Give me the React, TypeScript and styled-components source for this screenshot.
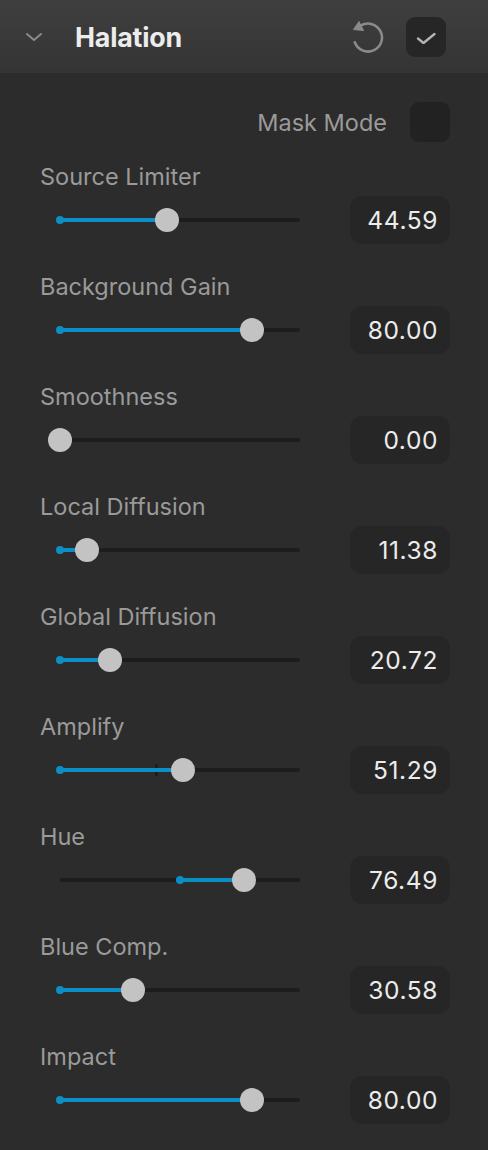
import React from "react";
import styled, { createGlobalStyle } from "styled-components";

const Global = createGlobalStyle`
  html, body { margin: 0; padding: 0; background: #2c2c2c; }
  body { font-family: Inter, "Noto Sans", sans-serif; -webkit-font-smoothing: antialiased; }
`;

const Panel = styled.div`
  width: 488px;
  min-height: 1150px;
  background: #2c2c2c;
`;

const Header = styled.div`
  height: 73px;
  display: flex;
  align-items: center;
  background: linear-gradient(#3f3f3f, #343434);
  padding: 0 42px 0 24px;
  box-sizing: border-box;
`;

const Chevron = styled.svg`
  width: 20px;
  height: 10px;
  margin-right: 31px;
`;

const Title = styled.div`
  flex: 1;
  color: #ececec;
  font-weight: 700;
  font-size: 26.8px;
  letter-spacing: -0.2px;
`;

const ResetIcon = styled.svg`
  width: 34px;
  height: 34px;
  margin-right: 22px;
`;

const HeaderCheck = styled.div`
  width: 40px;
  height: 40px;
  border-radius: 9px;
  background: #262626;
  display: flex;
  align-items: center;
  justify-content: center;
`;

const Body = styled.div`
  padding: 29px 38px 0 40px;
`;

const MaskRow = styled.div`
  height: 40px;
  display: flex;
  align-items: center;
  justify-content: flex-end;
  gap: 23px;
`;

const MaskLabel = styled.span`
  color: #9a9a9a;
  font-size: 23.5px;
`;

const MaskBox = styled.div`
  width: 40px;
  height: 40px;
  border-radius: 9px;
  background: #222222;
`;

const Rows = styled.div`
  margin-top: 13px;
  display: flex;
  flex-direction: column;
  gap: 21px;
`;

const Row = styled.div`
  display: flex;
  flex-direction: column;
`;

const Label = styled.div`
  padding-top: 8px;
  line-height: 28px;
  height: 28px;
  color: #9a9a9a;
  font-size: 23.5px;
`;

const Control = styled.div`
  margin-top: 5px;
  height: 48px;
  display: flex;
  align-items: center;
  justify-content: space-between;
`;

const SliderArea = styled.div`
  position: relative;
  margin-left: 20px;
  width: 240px;
  height: 24px;
`;

const Track = styled.div`
  position: absolute;
  left: 0;
  right: 0;
  top: 10px;
  height: 4px;
  border-radius: 2px;
  background: #1d1d1d;
`;

const Fill = styled.div`
  position: absolute;
  top: 10px;
  height: 4px;
  background: #0b8fc6;
`;

const StartDot = styled.div`
  position: absolute;
  top: 8px;
  width: 8px;
  height: 8px;
  margin-left: -4px;
  border-radius: 50%;
  background: #0b8fc6;
`;

const Tick = styled.div`
  position: absolute;
  top: 6px;
  width: 3px;
  height: 12px;
  margin-left: -1px;
  border-radius: 1.5px;
  background: #1d1d1d;
`;

const Thumb = styled.div`
  position: absolute;
  top: 0;
  width: 24px;
  height: 24px;
  margin-left: -12px;
  border-radius: 50%;
  background: #c3c3c3;
`;

const ValueBox = styled.div`
  width: 100px;
  height: 48px;
  box-sizing: border-box;
  border-radius: 12px;
  background: #262626;
  color: #ececec;
  font-size: 24.5px;
  letter-spacing: 0.6px;
  display: flex;
  align-items: center;
  justify-content: flex-end;
  padding-right: 12px;
`;

type Item = { label: string; value: number; origin?: number; tick?: number };

const items: Item[] = [
  { label: "Source Limiter", value: 44.59 },
  { label: "Background Gain", value: 80.0 },
  { label: "Smoothness", value: 0.0 },
  { label: "Local Diffusion", value: 11.38 },
  { label: "Global Diffusion", value: 20.72 },
  { label: "Amplify", value: 51.29, tick: 40 },
  { label: "Hue", value: 76.49, origin: 50 },
  { label: "Blue Comp.", value: 30.58 },
  { label: "Impact", value: 80.0 },
];

const SPAN = 240;

const Slider: React.FC<{ item: Item }> = ({ item }) => {
  const origin = item.origin ?? 0;
  const pos = (item.value / 100) * SPAN;
  const o = (origin / 100) * SPAN;
  const left = Math.min(o, pos);
  const width = Math.abs(pos - o);
  return (
    <SliderArea>
      <Track />
      {item.tick !== undefined && <Tick style={{ left: (item.tick / 100) * SPAN }} />}
      <Fill style={{ left, width }} />
      <StartDot style={{ left: o }} />
      <Thumb style={{ left: pos }} />
    </SliderArea>
  );
};

export default function App() {
  return (
    <>
      <Global />
      <Panel>
        <Header>
          <Chevron viewBox="0 0 20 10">
            <path d="M3 2 L10 8 L17 2" fill="none" stroke="#8a8a8a" strokeWidth="2" strokeLinecap="round" strokeLinejoin="round" />
          </Chevron>
          <Title>Halation</Title>
          <ResetIcon viewBox="0 0 34 34">
            <path d="M11 5.4 A14 14 0 1 1 4.8 22.3" fill="none" stroke="#8a8a8a" strokeWidth="2.6" strokeLinecap="round" />
            <path d="M3.5 9.5 L13.5 10.5 L9 1.5 Z" fill="#8a8a8a" stroke="#8a8a8a" strokeWidth="1" strokeLinejoin="round" />
          </ResetIcon>
          <HeaderCheck>
            <svg width="20" height="14" viewBox="0 0 20 14">
              <path d="M2 8.5 L7.5 13 L18.5 4" fill="none" stroke="#b4b4b4" strokeWidth="2.3" strokeLinecap="round" strokeLinejoin="round" />
            </svg>
          </HeaderCheck>
        </Header>
        <Body>
          <MaskRow>
            <MaskLabel>Mask Mode</MaskLabel>
            <MaskBox />
          </MaskRow>
          <Rows>
            {items.map((it) => (
              <Row key={it.label}>
                <Label>{it.label}</Label>
                <Control>
                  <Slider item={it} />
                  <ValueBox>{it.value.toFixed(2)}</ValueBox>
                </Control>
              </Row>
            ))}
          </Rows>
        </Body>
      </Panel>
    </>
  );
}
